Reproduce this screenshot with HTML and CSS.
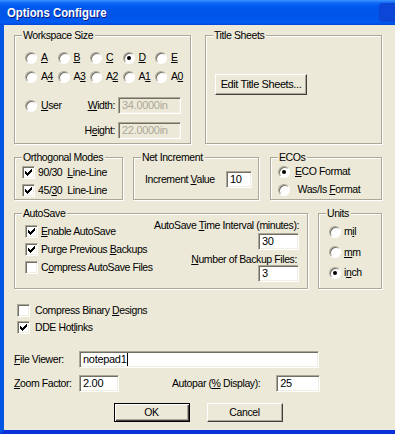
FILE: index.html
```html
<!DOCTYPE html>
<html lang="en">
<head>
<meta charset="utf-8">
<title>Options Configure</title>
<link rel="stylesheet" href="styles.css">
</head>
<body>
<div class="window">
  <div class="titlebar">
    <span class="title">Options Configure</span>
    <span class="title-edge"></span>
  </div>
  <div class="client">
    <div class="row row-top">
      <div class="group g-workspace">
        <span class="legend">Workspace Size</span>
        <div class="size-grid">
          <div class="opt"><span class="rb"></span><span><u>A</u></span></div>
          <div class="opt"><span class="rb"></span><span><u>B</u></span></div>
          <div class="opt"><span class="rb"></span><span><u>C</u></span></div>
          <div class="opt"><span class="rb on"></span><span><u>D</u></span></div>
          <div class="opt"><span class="rb"></span><span><u>E</u></span></div>
          <div class="opt"><span class="rb"></span><span>A<u>4</u></span></div>
          <div class="opt"><span class="rb"></span><span>A<u>3</u></span></div>
          <div class="opt"><span class="rb"></span><span>A<u>2</u></span></div>
          <div class="opt"><span class="rb"></span><span>A<u>1</u></span></div>
          <div class="opt"><span class="rb"></span><span>A<u>0</u></span></div>
        </div>
        <div class="user-row">
          <div class="opt user-opt"><span class="rb"></span><span><u>U</u>ser</span></div>
          <div class="dims">
            <div class="field"><span><u>W</u>idth:</span><span class="edit disabled dim">34.0000in</span></div>
            <div class="field"><span>H<u>e</u>ight:</span><span class="edit disabled dim">22.0000in</span></div>
          </div>
        </div>
      </div>
      <div class="group g-title">
        <span class="legend">Title Sheets</span>
        <span class="btn btn-edit">Edit Title Sheets...</span>
      </div>
    </div>

    <div class="row row-mid">
      <div class="group g-ortho">
        <span class="legend">Orthogonal Modes</span>
        <div class="opt"><span class="cb"><svg viewBox="0 0 9 9"><rect x="1" y="3" width="1" height="3"/><rect x="2" y="4" width="1" height="3"/><rect x="3" y="5" width="1" height="3"/><rect x="4" y="4" width="1" height="3"/><rect x="5" y="3" width="1" height="3"/><rect x="6" y="2" width="1" height="3"/><rect x="7" y="1" width="1" height="3"/></svg></span><span>90/30&nbsp; <u>L</u>ine-Line</span></div>
        <div class="opt"><span class="cb"><svg viewBox="0 0 9 9"><rect x="1" y="3" width="1" height="3"/><rect x="2" y="4" width="1" height="3"/><rect x="3" y="5" width="1" height="3"/><rect x="4" y="4" width="1" height="3"/><rect x="5" y="3" width="1" height="3"/><rect x="6" y="2" width="1" height="3"/><rect x="7" y="1" width="1" height="3"/></svg></span><span>45/<u>3</u>0&nbsp; Line-Line</span></div>
      </div>
      <div class="group g-net">
        <span class="legend">Net Increment</span>
        <span class="net-label">Increment <u>V</u>alue</span>
        <span class="edit net-edit">10</span>
      </div>
      <div class="group g-eco">
        <span class="legend">ECOs</span>
        <div class="opt"><span class="rb on"></span><span><u>E</u>CO Format</span></div>
        <div class="opt"><span class="rb"></span><span>&nbsp;Was/Is <u>F</u>ormat</span></div>
      </div>
    </div>

    <div class="row row-low">
      <div class="group g-auto">
        <span class="legend">AutoSave</span>
        <div class="auto-checks">
          <div class="opt"><span class="cb"><svg viewBox="0 0 9 9"><rect x="1" y="3" width="1" height="3"/><rect x="2" y="4" width="1" height="3"/><rect x="3" y="5" width="1" height="3"/><rect x="4" y="4" width="1" height="3"/><rect x="5" y="3" width="1" height="3"/><rect x="6" y="2" width="1" height="3"/><rect x="7" y="1" width="1" height="3"/></svg></span><span><u>E</u>nable AutoSave</span></div>
          <div class="opt"><span class="cb"><svg viewBox="0 0 9 9"><rect x="1" y="3" width="1" height="3"/><rect x="2" y="4" width="1" height="3"/><rect x="3" y="5" width="1" height="3"/><rect x="4" y="4" width="1" height="3"/><rect x="5" y="3" width="1" height="3"/><rect x="6" y="2" width="1" height="3"/><rect x="7" y="1" width="1" height="3"/></svg></span><span>Purge Previous <u>B</u>ackups</span></div>
          <div class="opt"><span class="cb"></span><span>C<u>o</u>mpress AutoSave Files</span></div>
        </div>
        <div class="auto-right">
          <span class="auto-lbl">AutoSave <u>T</u>ime Interval (minutes):</span>
          <span class="edit auto-edit">30</span>
          <span class="auto-lbl auto-lbl2"><u>N</u>umber of Backup Files:</span>
          <span class="edit auto-edit">3</span>
        </div>
      </div>
      <div class="group g-units">
        <span class="legend">Units</span>
        <div class="opt"><span class="rb"></span><span>m<u>i</u>l</span></div>
        <div class="opt"><span class="rb"></span><span><u>m</u>m</span></div>
        <div class="opt"><span class="rb on"></span><span>i<u>n</u>ch</span></div>
      </div>
    </div>

    <div class="extras">
      <div class="opt"><span class="cb"></span><span>Compress Binary <u>D</u>esigns</span></div>
      <div class="opt"><span class="cb"><svg viewBox="0 0 9 9"><rect x="1" y="3" width="1" height="3"/><rect x="2" y="4" width="1" height="3"/><rect x="3" y="5" width="1" height="3"/><rect x="4" y="4" width="1" height="3"/><rect x="5" y="3" width="1" height="3"/><rect x="6" y="2" width="1" height="3"/><rect x="7" y="1" width="1" height="3"/></svg></span><span>DDE Hot<u>l</u>inks</span></div>
    </div>

    <div class="form-row fv-row">
      <span class="form-label"><u>F</u>ile Viewer:</span>
      <span class="edit fv-edit">notepad1<span class="caret"></span></span>
    </div>
    <div class="form-row zf-row">
      <span class="form-label"><u>Z</u>oom Factor:</span>
      <span class="edit zf-edit">2.00</span>
      <span class="ap-label">Autopar (<u>%</u> Display):</span>
      <span class="edit ap-edit">25</span>
    </div>

    <div class="actions">
      <span class="btn btn-dlg btn-default">OK</span>
      <span class="btn btn-dlg">Cancel</span>
    </div>
  </div>
</div>
</body>
</html>
```

FILE: styles.css
```css
* { box-sizing: border-box; }
html, body { margin: 0; padding: 0; }
body {
  width: 395px;
  height: 434px;
  overflow: hidden;
  background: #ECE9D8;
  font-family: "Liberation Sans", Arial, sans-serif;
  font-size: 10.5px;
  letter-spacing: -0.4px;
  line-height: 13px;
  color: #000;
}
u { text-decoration-thickness: 1px; text-underline-offset: 1px; }

.window {
  width: 395px;
  height: 434px;
  display: flex;
  flex-direction: column;
}

.titlebar {
  position: relative;
  height: 25px;
  flex: none;
  display: flex;
  align-items: center;
  padding: 0 0 1px 7px;
  background: linear-gradient(to bottom,
    #3D95FF 0px, #1A74FA 2px, #0862F2 4px, #0058EE 7px,
    #0054E8 14px, #0057EC 19px, #005DF5 22px, #0048DA 25px);
  overflow: hidden;
}
.title {
  display: inline-block;
  color: #fff;
  font-weight: bold;
  font-size: 13.5px;
  letter-spacing: 0;
  text-shadow: 1px 1px 0 #0A1A80;
  transform: scaleX(0.84);
  transform-origin: left center;
}
.title-edge {
  position: absolute;
  right: -6px;
  top: 3px;
  width: 22px;
  height: 19px;
  border-radius: 4px;
  background: #0B46D6;
}

.client {
  flex: 1;
  border-left: 4px solid #0055E5;
  border-bottom: 4px solid #0831D9;
  padding: 10px 13px 0 10px;
  display: flex;
  flex-direction: column;
}

.row { display: flex; flex: none; }
.row-top { height: 109px; gap: 14px; }
.row-mid { height: 43px; margin-top: 13px; }
.row-low { height: 76px; margin-top: 13px; }

.group {
  position: relative;
  flex: none;
  border: 1px solid #ACA899;
  box-shadow: 1px 1px 0 #fff, inset 1px 1px 0 #fff;
}
.legend {
  position: absolute;
  top: -8px;
  left: 7px;
  padding: 0 2px 0 1px;
  background: #ECE9D8;
  line-height: 14px;
  white-space: nowrap;
}

.opt {
  display: flex;
  align-items: center;
  height: 13px;
  gap: 4px;
  white-space: nowrap;
}

.rb {
  position: relative;
  width: 12px;
  height: 12px;
  flex: none;
  border-radius: 50%;
  background: #fff;
  border: 1px solid;
  border-color: #ACA899 #fff #fff #ACA899;
  box-shadow: inset 1px 1px 0 #716F64;
}
.rb.on::after {
  content: "";
  position: absolute;
  left: 3px;
  top: 3px;
  width: 4px;
  height: 4px;
  border-radius: 50%;
  background: #000;
}

.cb {
  width: 13px;
  height: 13px;
  flex: none;
  background: #fff;
  border: 1px solid;
  border-color: #ACA899 #fff #fff #ACA899;
  box-shadow: inset 1px 1px 0 #716F64, inset -1px -1px 0 #F1EFE2;
  display: flex;
  align-items: center;
  justify-content: center;
}
.cb svg { width: 9px; height: 9px; display: block; fill: #000; shape-rendering: crispEdges; }

.edit {
  display: flex;
  align-items: center;
  height: 17px;
  padding-left: 3px;
  background: #fff;
  border: 1px solid;
  border-color: #ACA899 #fff #fff #ACA899;
  box-shadow: inset 1px 1px 0 #716F64, inset -1px -1px 0 #F1EFE2;
  white-space: nowrap;
  overflow: hidden;
  flex: none;
  font-size: 11px;
  letter-spacing: -0.3px;
}
.edit.disabled { background: #ECE9D8; color: #ACA899; }
.caret { display: inline-block; width: 1px; height: 13px; background: #000; margin-left: 1px; }

.btn {
  display: flex;
  align-items: center;
  justify-content: center;
  background: #ECE9D8;
  border: 1px solid;
  border-color: #fff #404040 #404040 #fff;
  box-shadow: inset -1px -1px 0 #ACA899;
  white-space: nowrap;
}

/* Workspace size */
.g-workspace { width: 177px; padding: 15px 9px 0 10px; }
.size-grid {
  display: grid;
  grid-template-columns: repeat(5, 32.5px);
  row-gap: 6px;
}
.user-row { display: flex; margin-top: 14px; }
.user-opt { margin-top: 2px; }
.dims { margin-left: auto; display: flex; flex-direction: column; gap: 8px; }
.field { display: flex; align-items: center; justify-content: flex-end; gap: 3px; white-space: nowrap; }
.dim { width: 63px; }

/* Title sheets */
.g-title { width: 177px; padding: 38px 0 0 9px; }
.btn-edit { width: 92px; height: 21px; font-size: 11px; }

/* Orthogonal */
.g-ortho { width: 109px; padding: 8px 0 0 7px; display: flex; flex-direction: column; gap: 5px; }
.g-ortho .opt { gap: 3px; }

/* Net increment */
.g-net { width: 126px; margin-left: 10px; display: flex; align-items: center; padding: 1px 6px 0 11px; }
.net-label { white-space: nowrap; }
.net-edit { width: 26px; margin-left: auto; }

/* ECOs */
.g-eco { width: 112px; margin-left: 11px; padding: 7px 0 0 7px; display: flex; flex-direction: column; gap: 5px; }
.g-eco .opt { gap: 5px; }

/* AutoSave */
.g-auto { width: 294px; display: flex; padding: 0 8px 0 10px; }
.auto-checks { display: flex; flex-direction: column; gap: 5px; padding-top: 11px; }
.auto-checks .opt { gap: 3px; }
.auto-right { margin-left: auto; display: flex; flex-direction: column; align-items: flex-end; padding-top: 5px; }
.auto-lbl { line-height: 12px; white-space: nowrap; margin-bottom: 2px; }
.auto-lbl2 { margin-top: 3px; margin-bottom: 0; padding-right: 2px; }
.auto-edit { width: 41px; }

/* Units */
.g-units { width: 64px; margin-left: 10px; padding: 11px 0 0 10px; display: flex; flex-direction: column; gap: 7.5px; }
.g-units .opt { gap: 3px; }

/* Extras */
.extras { margin-top: 15px; padding-left: 3px; display: flex; flex-direction: column; gap: 4px; }
.extras .opt { gap: 5px; }

.form-row { display: flex; align-items: center; }
.fv-row { margin-top: 17px; }
.zf-row { margin-top: 7px; }
.form-label { width: 65px; flex: none; white-space: nowrap; }
.fv-edit { width: 240px; }
.zf-edit { width: 40px; }
.ap-label { margin-left: 53px; white-space: nowrap; }
.ap-edit { width: 44px; margin-left: 16px; }

.actions { display: flex; justify-content: center; gap: 17px; margin-top: 11px; }
.btn-dlg { width: 76px; height: 19px; }
.btn-default {
  border-color: #000;
  box-shadow: inset 1px 1px 0 #fff, inset -1px -1px 0 #404040, inset -2px -2px 0 #ACA899;
}
```
